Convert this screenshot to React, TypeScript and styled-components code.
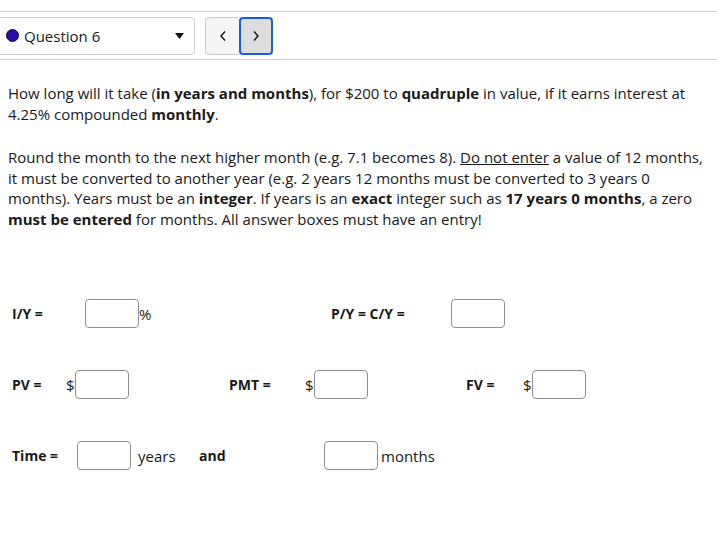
import React from "react";
import styled, { createGlobalStyle } from "styled-components";

const Global = createGlobalStyle`
  html, body { margin: 0; padding: 0; background: #fff; }
  body {
    font-family: "Open Sans", "Liberation Sans", sans-serif;
    color: #1a1a1a;
    overflow: hidden;
    width: 717px;
    height: 533px;
  }
`;

const Page = styled.div`
  width: 717px;
  padding-top: 11px;
`;

const Header = styled.div`
  display: flex;
  align-items: center;
  gap: 10px;
  border-top: 1px solid #cccccc;
  border-bottom: 1px solid #cccccc;
  padding: 5px 0 4px 0;
`;

const Select = styled.div`
  display: flex;
  align-items: center;
  box-sizing: border-box;
  width: 207px;
  height: 38px;
  margin-left: -12px;
  padding-left: 17px;
  padding-right: 10px;
  padding-bottom: 1px;
  border: 1px solid #cccccc;
  border-radius: 4px;
  background: #fff;
  font-size: 15px;
`;

const Dot = styled.span`
  width: 11px;
  height: 11px;
  border-radius: 50%;
  background: #2a0aa8;
  border: 1px solid #111;
  margin-right: 5px;
  flex: none;
`;

const SelectLabel = styled.span`
  flex: 1;
`;

const Caret = styled.svg`
  width: 9px;
  height: 6px;
`;

const NavGroup = styled.div`
  display: flex;
`;

const NavButton = styled.div<{ $active?: boolean }>`
  box-sizing: border-box;
  width: 34px;
  height: 38px;
  display: flex;
  align-items: center;
  justify-content: center;
  background: ${(p) => (p.$active ? "#dddddd" : "#f5f5f5")};
  border: ${(p) => (p.$active ? "2px solid #1a5fd6" : "1px solid #cccccc")};
  border-radius: ${(p) => (p.$active ? "4px" : "4px 0 0 4px")};
  ${(p) => (p.$active ? "" : "border-right: none;")}
`;

const Body = styled.div`
  padding: 0 8px;
  font-size: 15px;
  line-height: 20.6px;
`;

const Para = styled.p<{ $top: number }>`
  margin: ${(p) => p.$top}px 0 0 0;
`;

const U = styled.span`
  text-decoration: underline;
`;

const Form = styled.div`
  padding-left: 12px;
  margin-top: 70px;
  display: flex;
  flex-direction: column;
  gap: 43px;
`;

const Row = styled.div`
  display: flex;
  align-items: center;
  height: 28px;
`;

const Cell = styled.div<{ $w: number }>`
  width: ${(p) => p.$w}px;
  flex: none;
  display: flex;
  align-items: center;
`;

const Label = styled.span`
  font-weight: 700;
  font-size: 14px;
`;

const Unit = styled.span<{ $gap?: number }>`
  font-size: 15px;
  margin-left: ${(p) => p.$gap ?? 0}px;
`;

const Box = styled.div`
  box-sizing: border-box;
  width: 54px;
  height: 29px;
  border: 1px solid #8f8f8f;
  border-radius: 4px;
  background: #fff;
  flex: none;
`;

export default function App() {
  return (
    <Page>
      <Global />
      <Header>
        <Select>
          <Dot />
          <SelectLabel>Question 6</SelectLabel>
          <Caret viewBox="0 0 9 6">
            <path d="M0 0 L9 0 L4.5 6 Z" fill="#111" />
          </Caret>
        </Select>
        <NavGroup>
          <NavButton>
            <svg width="8" height="12" viewBox="0 0 8 12">
              <path d="M6 1.5 L2 6 L6 10.5" fill="none" stroke="#111" strokeWidth="1.4" />
            </svg>
          </NavButton>
          <NavButton $active>
            <svg width="8" height="12" viewBox="0 0 8 12">
              <path d="M2 1.5 L6 6 L2 10.5" fill="none" stroke="#111" strokeWidth="1.4" />
            </svg>
          </NavButton>
        </NavGroup>
      </Header>
      <Body>
        <Para $top={23}>
          How long will it take (<b>in years and months</b>), for $200 to <b>quadruple</b> in value, if it earns interest at 4.25% compounded <b>monthly</b>.
        </Para>
        <Para $top={23}>
          Round the month to the next higher month (e.g. 7.1 becomes 8). <U>Do not enter</U> a value of 12 months, it must be converted to another year (e.g. 2 years 12 months must be converted to 3 years 0 months). Years must be an <b>integer</b>. If years is an <b>exact</b> integer such as <b>17 years 0 months</b>, a zero <b>must be entered</b> for months. All answer boxes must have an entry!
        </Para>
      </Body>
      <Form>
        <Row>
          <Cell $w={73}><Label>I/Y =</Label></Cell>
          <Cell $w={246}><Box /><Unit>%</Unit></Cell>
          <Cell $w={120}><Label>P/Y = C/Y =</Label></Cell>
          <Cell $w={60}><Box /></Cell>
        </Row>
        <Row>
          <Cell $w={54}><Label>PV =</Label></Cell>
          <Cell $w={163}><Unit>$</Unit><Box /></Cell>
          <Cell $w={76}><Label>PMT =</Label></Cell>
          <Cell $w={161}><Unit>$</Unit><Box /></Cell>
          <Cell $w={57}><Label>FV =</Label></Cell>
          <Cell $w={70}><Unit>$</Unit><Box /></Cell>
        </Row>
        <Row>
          <Cell $w={65}><Label>Time =</Label></Cell>
          <Cell $w={122}><Box /><Unit $gap={7}>years</Unit></Cell>
          <Cell $w={125}><Label>and</Label></Cell>
          <Cell $w={120}><Box /><Unit $gap={3}>months</Unit></Cell>
        </Row>
      </Form>
    </Page>
  );
}
